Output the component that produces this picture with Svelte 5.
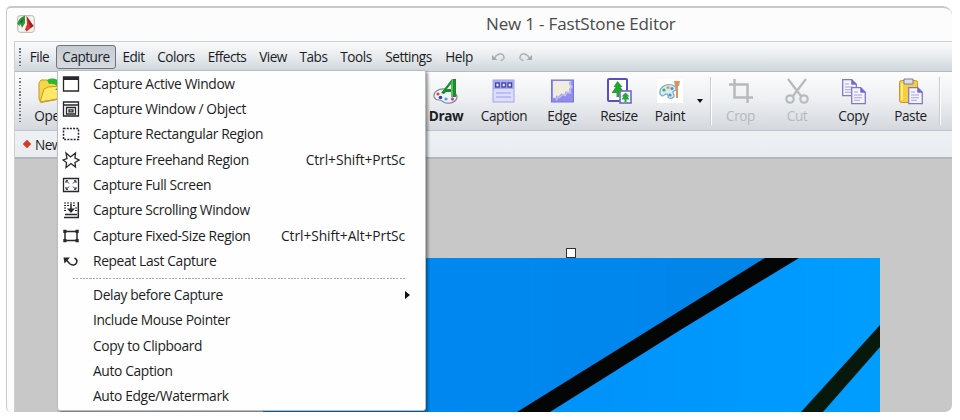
<script>
  const menus = ['File', 'Capture', 'Edit', 'Colors', 'Effects', 'View', 'Tabs', 'Tools', 'Settings', 'Help'];

  const captureItems = [
    { icon: 'window', label: 'Capture Active Window' },
    { icon: 'object', label: 'Capture Window / Object' },
    { icon: 'rect', label: 'Capture Rectangular Region' },
    { icon: 'freehand', label: 'Capture Freehand Region', keys: 'Ctrl+Shift+PrtSc' },
    { icon: 'full', label: 'Capture Full Screen' },
    { icon: 'scroll', label: 'Capture Scrolling Window' },
    { icon: 'fixed', label: 'Capture Fixed-Size Region', keys: 'Ctrl+Shift+Alt+PrtSc' },
    { icon: 'repeat', label: 'Repeat Last Capture' },
  ];

  const optionItems = [
    { label: 'Delay before Capture', submenu: true },
    { label: 'Include Mouse Pointer' },
    { label: 'Copy to Clipboard' },
    { label: 'Auto Caption' },
    { label: 'Auto Edge/Watermark' },
  ];

  const tools = [
    { icon: 'open', label: 'Open' },
    { icon: '', label: '' },
    { icon: 'draw', label: 'Draw', bold: true },
    { icon: 'caption', label: 'Caption' },
    { icon: 'edge', label: 'Edge' },
    { icon: 'resize', label: 'Resize' },
    { icon: 'paint', label: 'Paint' },
    { icon: 'arrow', label: '' },
    { icon: 'sep', label: '' },
    { icon: 'crop', label: 'Crop', disabled: true },
    { icon: 'cut', label: 'Cut', disabled: true },
    { icon: 'copy', label: 'Copy' },
    { icon: 'paste', label: 'Paste' },
    { icon: 'sep', label: '' },
  ];

  let active = 'Capture';
</script>

{#snippet page(x, y)}
  <g transform="translate({x} {y})">
    <path d="M.7 .7h9l4.600 4.600v11.400H.7z" fill="#f4f3ff" stroke="#8079c4" stroke-width="1.3" />
    <path d="M9.7 .7v4.600h4.600z" fill="#7468d2" stroke="#7468d2" stroke-width=".8" />
    <path d="M3 5h4M3 8h8M3 10.700h8M3 13.300h6" stroke="#aaa2e4" stroke-width="1.1" />
  </g>
{/snippet}

<div class="window">
  <header class="titlebar">
    <svg class="logo" width="18" height="18" viewBox="0 0 18 18">
      <rect x=".7" y=".7" width="16.6" height="16.6" rx="2.5" fill="#f6f4f2" stroke="#b9b3ae" />
      <path d="M8 .5C4 2 1 5 .5 9l2 2 1-2 1.500 4L8 8z" fill="#2a9a3c" />
      <path d="M7 2 2.500 7.500 5 8z" fill="#0d7322" />
      <path d="M9.500 1 16.500 11l-7 5.500-1.500-2 2-5z" fill="#de2f2b" />
      <path d="M9.500 1 16.500 11l-3 2z" fill="#a81c20" />
    </svg>
    <h1>New 1 - FastStone Editor</h1>
  </header>

  <div class="content">
    <nav class="menubar">
      <i class="grip"></i>
      {#each menus as name}
        <button type="button" class:active={name === active}><span>{name}</span></button>
      {/each}
      <svg class="history" width="50" height="12" viewBox="0 0 50 12">
        <g fill="none" stroke="#aeb2b6" stroke-width="1.5">
          <path d="M4 8c2-5 7-6.500 9-4s1 5-2.500 5.500" />
          <path d="M40 8c-2-5-7-6.500-9-4s-1 5 2.500 5.500" />
        </g>
        <path d="M2 4v5h5.500zM42 4v5h-5.500z" fill="#a5a9ad" />
      </svg>
    </nav>

    <div class="toolbar">
      <i class="grip"></i>
      {#each tools as tool}
        {#if tool.icon === 'sep'}
          <i class="sep"></i>
        {:else if tool.icon === 'arrow'}
          <i class="drop"></i>
        {:else}
          <div class="tool" class:bold={tool.bold} class:disabled={tool.disabled}>
            <svg width="28" height="28" viewBox="0 0 28 28">
              {#if tool.icon === 'open'}
                <path d="M2 6l2-3h6l2 2 11-1v18L4 25.500 2 22z" fill="#f5d648" stroke="#c09a2c" />
                <path d="M7 12l4-2 13-1-4 13-17 3z" fill="#ffe868" stroke="#c79b24" />
                <path d="M10 3c6-3 11-1 13 3l3-2v9h-8l3-3c-2-3-6-4-9-3z" fill="#2fb62f" />
              {:else if tool.icon === 'draw'}
                <path d="M2 20c-1-5 5-9 11-8s12 4 12 8-5 7-11 6c-3-.5-4-3-7-3-2 0-4-1-5-3z" fill="#f1f1f8" stroke="#858895" stroke-width="1.200" />
                <path d="m9 16 11-14h4v18h-5v-5h-5l-2 2z" fill="#188d2b" />
                <path d="m15 12 4-5v5z" fill="#fff" />
                <path d="M20 2h1v18h-2V8z" fill="#60ba61" />
                <circle cx="6" cy="17" r="1.500" fill="#d44242" />
                <circle cx="8.500" cy="20.500" r="1.800" fill="#303cc8" />
                <circle cx="14" cy="22" r="1.600" fill="#3aaad2" />
                <circle cx="20.500" cy="22" r="1.700" fill="#d640bd" />
              {:else if tool.icon === 'caption'}
                <rect x="3" y="3" width="21" height="22" fill="#dcdcff" stroke="#a4a5e6" />
                <path d="M3 3h21v9H3z" fill="#a9aaf0" />
                <g fill="#eeeeff" stroke="#4344a8" stroke-width="1.400">
                  <rect x="5.700" y="6" width="3.500" height="4" /><rect x="12" y="6" width="3.500" height="4" /><rect x="18" y="6" width="3.500" height="4" />
                </g>
                <path d="M6 16h15M6 20h15" stroke="#a0a0dc" />
              {:else if tool.icon === 'edge'}
                <rect x="3.500" y="3" width="22" height="22" fill="#8f8df0" stroke="#7775d3" />
                <path d="M5 4h17l-1 3 2 3-2 2 .500 3-4-.500-1 3-3-1-3 3-2-1-1 3-2.500-1z" fill="#efedde" />
                <path d="m23 4-1 3 2 3-2 2 .500 4-4-.500-1 3-3-1-3 3-2-1-1 4" fill="none" stroke="#c3c0f0" stroke-width="1.500" />
              {:else if tool.icon === 'resize'}
                <rect x="3" y="2" width="19" height="22" rx="1" fill="#fff" stroke="#5950bd" stroke-width="2" />
                <path d="m12.500 4-4 6h2l-4 6h5v4h3v-4h5l-4-6h2z" fill="#24a52b" />
                <rect x="15" y="14" width="11" height="12" fill="#f8f8ff" stroke="#7068c4" stroke-width="1.600" />
                <path d="m20.500 15.500-4 4h2l-2 3h3v2.500h2v-2.500h3l-2-3h2z" fill="#27a83a" />
              {:else if tool.icon === 'paint'}
                <path d="M1 2h26v24H1z" fill="#fff" />
                <path d="M4 17c-1-6 5-11 12-9 5 1 5 5 2 6-2 1-1 2 0 4s-2 4-5 3c-2-1 0-3-2-4s-2 2-5 2z" fill="#d4ecf4" stroke="#77a9bf" stroke-width="1.200" />
                <circle cx="8" cy="13" r="1.600" fill="#4ca95d" /><circle cx="12" cy="10.500" r="1.600" fill="#ec9a3e" /><circle cx="16" cy="11.500" r="1.500" fill="#5084d4" /><circle cx="14" cy="18" r="1.600" fill="#3f9ccb" />
                <path d="M18 4h6l-1 5h-4zM20 9h2v12h-2z" fill="#dc9258" />
              {:else if tool.icon === 'crop'}
                <path d="M7.500 2v18.500H26M2 7.500h18.500V26" fill="none" stroke="#b7babd" stroke-width="2.500" />
              {:else if tool.icon === 'cut'}
                <g fill="none" stroke="#b7babd" stroke-width="2.200">
                  <path d="m5 2 13 17M23 2 10 19" />
                  <circle cx="7" cy="22" r="3.700" /><circle cx="21" cy="22" r="3.700" />
                </g>
              {:else if tool.icon === 'copy'}
                {@render page(2, 2)}
                {@render page(11, 10)}
              {:else if tool.icon === 'paste'}
                <rect x="2.500" y="3.500" width="18" height="22" rx="2" fill="#f7cf3c" stroke="#c5962a" />
                <path d="M5 6v17" stroke="#ffe993" stroke-width="2" />
                <path d="M7 2h9v5H7z" fill="#ddddef" stroke="#7c7b9d" />
                {@render page(11, 10)}
              {/if}
            </svg>
            <span>{tool.label}</span>
          </div>
        {/if}
      {/each}
    </div>

    <div class="tabs"><i></i><span>New 1</span></div>

    <main class="canvas">
      <svg class="photo" width="617" height="154" viewBox="1 0 617 154">
        <defs>
          <linearGradient id="sky" x1="0" x2="1" y2="0">
            <stop offset="0" stop-color="#008af2" />
            <stop offset=".55" stop-color="#0087ee" />
            <stop offset="1" stop-color="#0083e3" />
          </linearGradient>
          <linearGradient id="pane" x1="0" x2="1">
            <stop offset="0" stop-color="#0092fa" />
            <stop offset="1" stop-color="#009dff" />
          </linearGradient>
        </defs>
        <path d="M0 0h618v154H0z" fill="url(#sky)" />
        <path d="M520 0h98v154H275z" fill="url(#pane)" />
        <path d="M503 0h34L420 71 288 154h-33L395 67z" fill="#040505" />
        <path d="M618 67v22l-57 65h-22z" fill="#06190b" />
      </svg>
      <i class="handle"></i>
    </main>
  </div>

  <div class="dropdown">
    {#each captureItems as item}
      <div class="row">
        <svg width="18" height="18" viewBox="0 0 18 18" fill="none" stroke="#27272d" stroke-width="1.300">
          {#if item.icon === 'window'}
            <path d="M1.500 2h15v14h-15z" /><path d="M1.500 3.500h15" stroke-width="3" />
          {:else if item.icon === 'object'}
            <path d="M1.500 2h15v14h-15zM1.500 5h15M4.500 7.500h9v6.500h-9zM7 9.800h4v2H7z" />
          {:else if item.icon === 'rect'}
            <path d="M1.500 3.500h15v11h-15z" stroke-dasharray="2 1.200" stroke-width="1.500" />
          {:else if item.icon === 'freehand'}
            <path d="M4 2l4.500 4 5-4-.500 5 4 2-4 2.500.500 4.500L9 12.500 4 16.500l.500-5L1 9l4-1.500z" />
          {:else if item.icon === 'full'}
            <path d="M1.500 2.500h15v13h-15z" />
            <path d="M4.500 5 7 7.500M13.500 5 11 7.500M4.500 13 7 10.500M13.500 13 11 10.500M4 7V4.700h2M12 4.700h2V7M4 11v2.300h2M12 13.300h2V11" stroke-width="1" />
          {:else if item.icon === 'scroll'}
            <path d="M2 2h12M2 4.500h5m4 0h3M2 7h3m8 0h2M2 9.500h3m8 0h2" stroke-dasharray="2 1" stroke-width="1" />
            <path d="M16.300 1v15.500H2" stroke-width="1.500" /><path d="M9 3v6M3 13.500h12" stroke-width="1.500" /><path d="M5 7.500h8l-4 4.500z" fill="#27272d" stroke="none" />
          {:else if item.icon === 'fixed'}
            <path d="M3 4.500h12v9H3z" stroke-width="1.500" />
            <path d="M1.300 2.800h3.200v3.200H1.300zM13.500 2.800h3.200v3.200h-3.200zM1.300 12h3.200v3.200H1.300zM13.500 12h3.200v3.200h-3.200z" fill="#27272d" stroke="none" />
          {:else}
            <path d="m4 7.500 3.500 4c2.500 2.500 6 1.800 7-.5s0-4-2-5" stroke-width="1.500" /><path d="M1.500 5.500H8L2.500 11.500z" fill="#27272d" stroke="none" />
          {/if}
        </svg>
        <span class="label">{item.label}</span>
        {#if item.keys}<span class="keys">{item.keys}</span>{/if}
      </div>
    {/each}
    <hr />
    {#each optionItems as item}
      <div class="row">
        <i></i>
        <span class="label">{item.label}</span>
        {#if item.submenu}<i class="more"></i>{/if}
      </div>
    {/each}
  </div>
</div>

<style>
  :global(body) {
    background: #fff;
  }

  .window {
    position: relative;
    box-sizing: border-box;
    width: 946px;
    height: 406px;
    margin: 6px 0 0 6px;
    border: solid #c8c8c8;
    border-width: 2px 0 0 1px;
    border-radius: 5px 9px 7px 5px;
    background: #fcfcfc;
    overflow: hidden;
    color: #1c1c24;
    font-family: 'Open Sans', 'Noto Sans', sans-serif;
    font-size: 13.6px;
    letter-spacing: -0.5px;
    white-space: nowrap;
  }

  .titlebar {
    display: grid;
    grid-template-columns: 18px 1fr;
    align-items: center;
    height: 33px;
    padding-left: 10px;
  }

  .logo {
    margin-top: -2px;
  }

  h1 {
    margin: -2px 0 0;
    padding-left: 451px;
    color: #4a4a4a;
    font-size: 17px;
    font-weight: 400;
    letter-spacing: -0.17px;
  }

  .content {
    margin-left: 7px;
    border-top: 1px solid #cfcfd2;
    border-left: 1px solid #cfcfd2;
  }

  .menubar {
    display: grid;
    grid-template-columns: 8px 33px 60px 35px 50px 52px 40px 41px 44px 61px 40px 61px;
    align-items: center;
    height: 29px;
    border-bottom: 1px solid #b8bcc2;
    background: linear-gradient(#fafbfc, #e8ebee 50%, #ced7dc);
  }

  button {
    height: 24px;
    padding: 0;
    border: 1px solid transparent;
    background: none;
    color: inherit;
    font: inherit;
    letter-spacing: inherit;
  }

  button.active {
    border-color: #6f747c;
    border-radius: 3px;
    background: linear-gradient(#c5cbd1, #d6dbe0);
  }

  .history {
    justify-self: end;
  }

  .grip {
    width: 2px;
    height: 18px;
    margin-left: 4px;
    background: repeating-linear-gradient(#70757b 0 1.5px, transparent 1.5px 3.3px);
  }

  .toolbar {
    display: grid;
    grid-template-columns: 8px 56px 338px 58px 58px 58px 56px 46px 13px 6px 57px 56px 57px 57px 2px;
    align-items: center;
    height: 58px;
    border-bottom: 1px solid #bfc3c8;
    background: linear-gradient(#fdfdfd, #eceef1 50%, #d4d8dd);
    letter-spacing: -0.4px;
  }

  .toolbar .grip {
    height: 46px;
  }

  .tool {
    display: flex;
    flex-direction: column;
    align-items: center;
    height: 53px;
    line-height: 18px;
    margin-top: 1px;
  }

  .tool svg {
    flex: none;
    height: 28px;
    margin-top: 2px;
    margin-bottom: 2px;
  }

  .bold {
    font-weight: 700;
  }

  .disabled {
    color: #b6babd;
  }

  .sep {
    justify-self: end;
    width: 1px;
    height: 48px;
    border-left: 1px solid #c9ccd0;
    background: #fff;
  }

  .drop {
    justify-self: center;
    border: 3.5px solid transparent;
    border-top: 4px solid #111;
    border-bottom: 0;
  }

  .tabs {
    display: flex;
    align-items: center;
    gap: 5px;
    height: 26px;
    padding-left: 9px;
    border-bottom: 2px solid #b5b6b9;
    background: linear-gradient(#eef1f4, #e8ecf0);
  }

  .tabs i {
    width: 6px;
    height: 6px;
    background: #d63b27;
    transform: rotate(45deg);
  }

  .canvas {
    position: relative;
    height: 260px;
    background: #c8c8c8;
  }

  .photo {
    position: absolute;
    top: 99px;
    left: 248px;
  }

  .handle {
    position: absolute;
    top: 89px;
    left: 551px;
    box-sizing: border-box;
    width: 10px;
    height: 10px;
    border: 1.5px solid #333;
    background: #fff;
  }

  .dropdown {
    position: absolute;
    top: 62px;
    left: 50px;
    box-sizing: border-box;
    width: 369px;
    height: 341px;
    border: 1px solid #b9bcc0;
    border-radius: 0 2px 3px 3px;
    background: #fefefe;
    box-shadow: 2px 2px 3px #0006;
    font-size: 13.8px;
    letter-spacing: -0.36px;
  }

  .row {
    display: grid;
    grid-template-columns: 31px 1fr auto;
    align-items: center;
    height: 25.35px;
    padding: 0 20px 0 4px;
  }

  .label,
  .keys {
    margin-top: -1px;
  }

  .keys {
    letter-spacing: -0.08px;
  }

  .more {
    margin-right: -13px;
    border: 4px solid transparent;
    border-left: 5px solid #111;
    border-right: 0;
  }

  hr {
    height: 1px;
    margin: 4px 19px 3.500px 15px;
    border: 0;
    background: repeating-linear-gradient(90deg, #aaa 0 2px, transparent 2px 3.300px);
  }
</style>
